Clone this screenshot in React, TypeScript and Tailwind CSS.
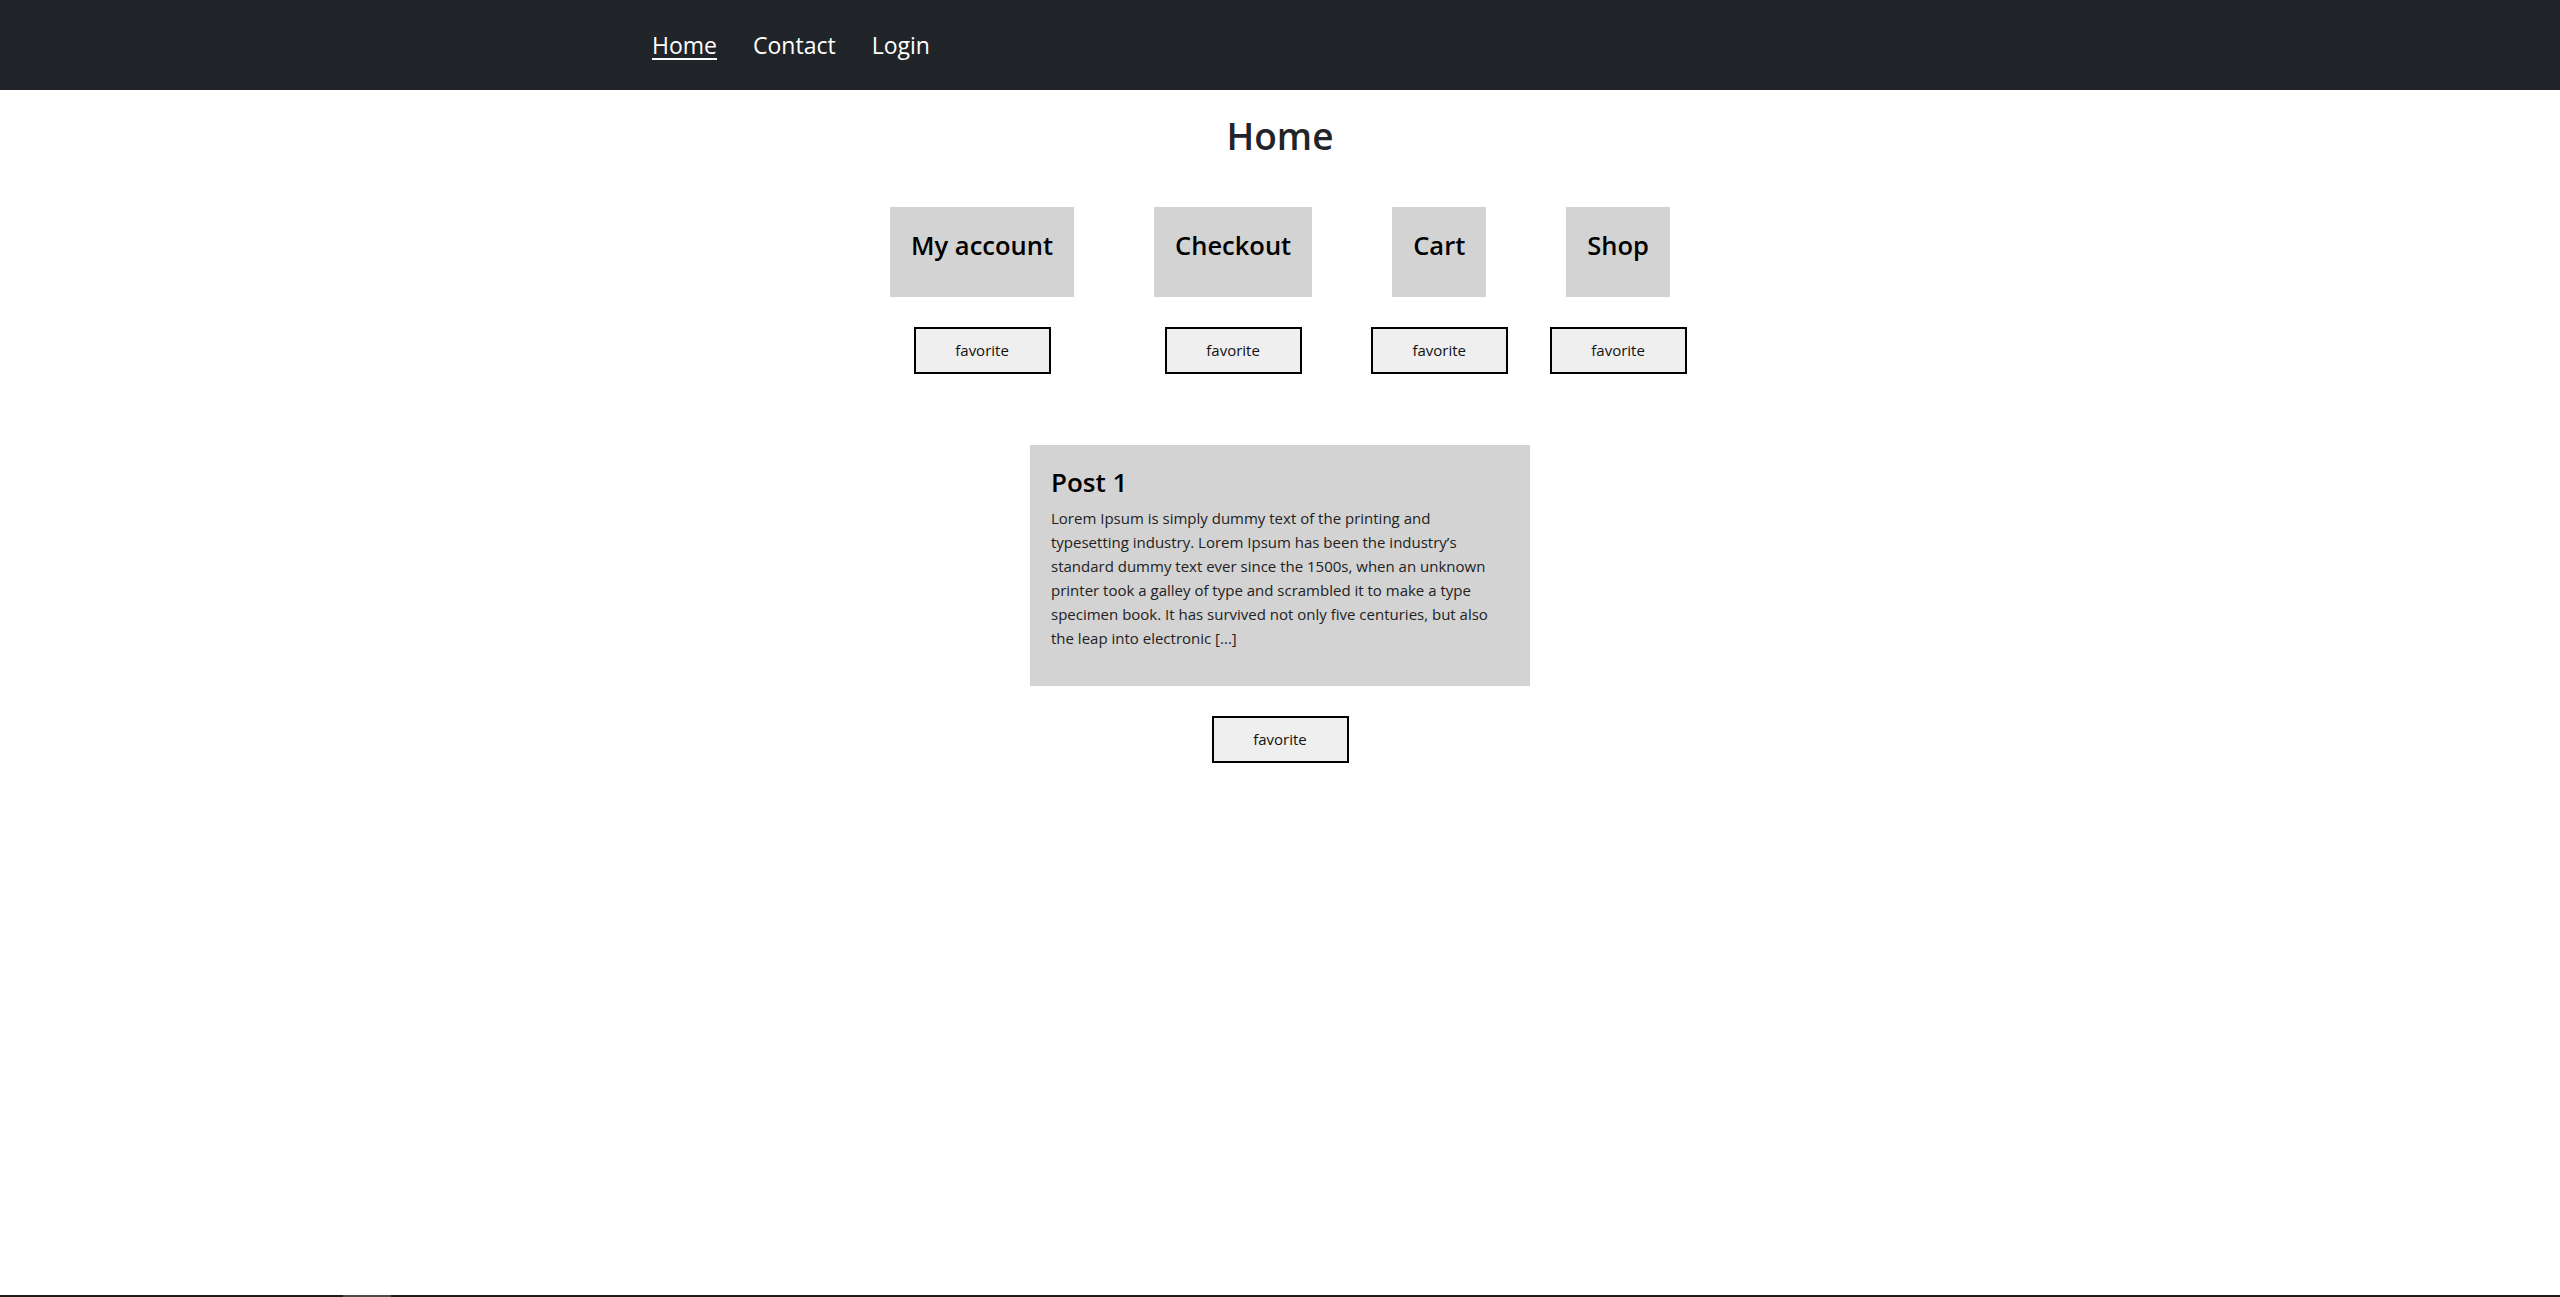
import React from "react";

const font = { fontFamily: '"Open Sans", "Noto Sans", sans-serif' };

const links = ["Home", "Contact", "Login"];
const shortcuts = ["My account", "Checkout", "Cart", "Shop"];

const FavoriteButton = () => (
  <button className="w-[137px] h-[47px] border-2 border-black bg-[#efefef] text-[15px] text-[#111]">
    favorite
  </button>
);

const App = () => {
  return (
    <div className="min-h-screen flex flex-col bg-white text-[#212529]" style={font}>
      <nav className="h-[90px] bg-[#212529]">
        <div className="mx-auto w-[1256px] h-full flex items-center gap-[36px] text-[23px] leading-[36px] text-white">
          {links.map((l, i) => (
            <a key={l} href="#" className={i === 0 ? "underline underline-offset-[4px]" : ""}>
              {l}
            </a>
          ))}
        </div>
      </nav>

      <main className="flex-1 flex flex-col items-center">
        <h1 className="mt-[23px] text-[37px] leading-[46px] font-semibold">Home</h1>

        <div className="mt-[48px] flex justify-center">
          {shortcuts.map((s) => (
            <div key={s} className="flex flex-col items-center">
              <div className="mx-[40px] h-[90px] bg-[#d3d3d3] px-[21px] pt-[22px]">
                <h4 className="text-[25.5px] leading-[32px] font-semibold text-black whitespace-nowrap">{s}</h4>
              </div>
              <div className="mt-[30px]">
                <FavoriteButton />
              </div>
            </div>
          ))}
        </div>

        <div className="mt-[71px] w-[500px] bg-[#d3d3d3] px-[21px] pt-[21px] pb-[36px]">
          <h4 className="text-[26px] leading-[32px] font-semibold text-black">Post 1</h4>
          <p className="mt-[8px] text-[15px] leading-[24px] text-[#222]">
            Lorem Ipsum is simply dummy text of the printing and
            <br />
            typesetting industry. Lorem Ipsum has been the industry’s
            <br />
            standard dummy text ever since the 1500s, when an unknown
            <br />
            printer took a galley of type and scrambled it to make a type
            <br />
            specimen book. It has survived not only five centuries, but also
            <br />
            the leap into electronic [...]
          </p>
        </div>
        <div className="mt-[30px]">
          <FavoriteButton />
        </div>
      </main>

      <div className="h-[2px] bg-[#1c1c1c] flex">
        <div className="ml-[343px] w-[48px] bg-[#4a4a4a]" />
      </div>
    </div>
  );
};

export default App;
